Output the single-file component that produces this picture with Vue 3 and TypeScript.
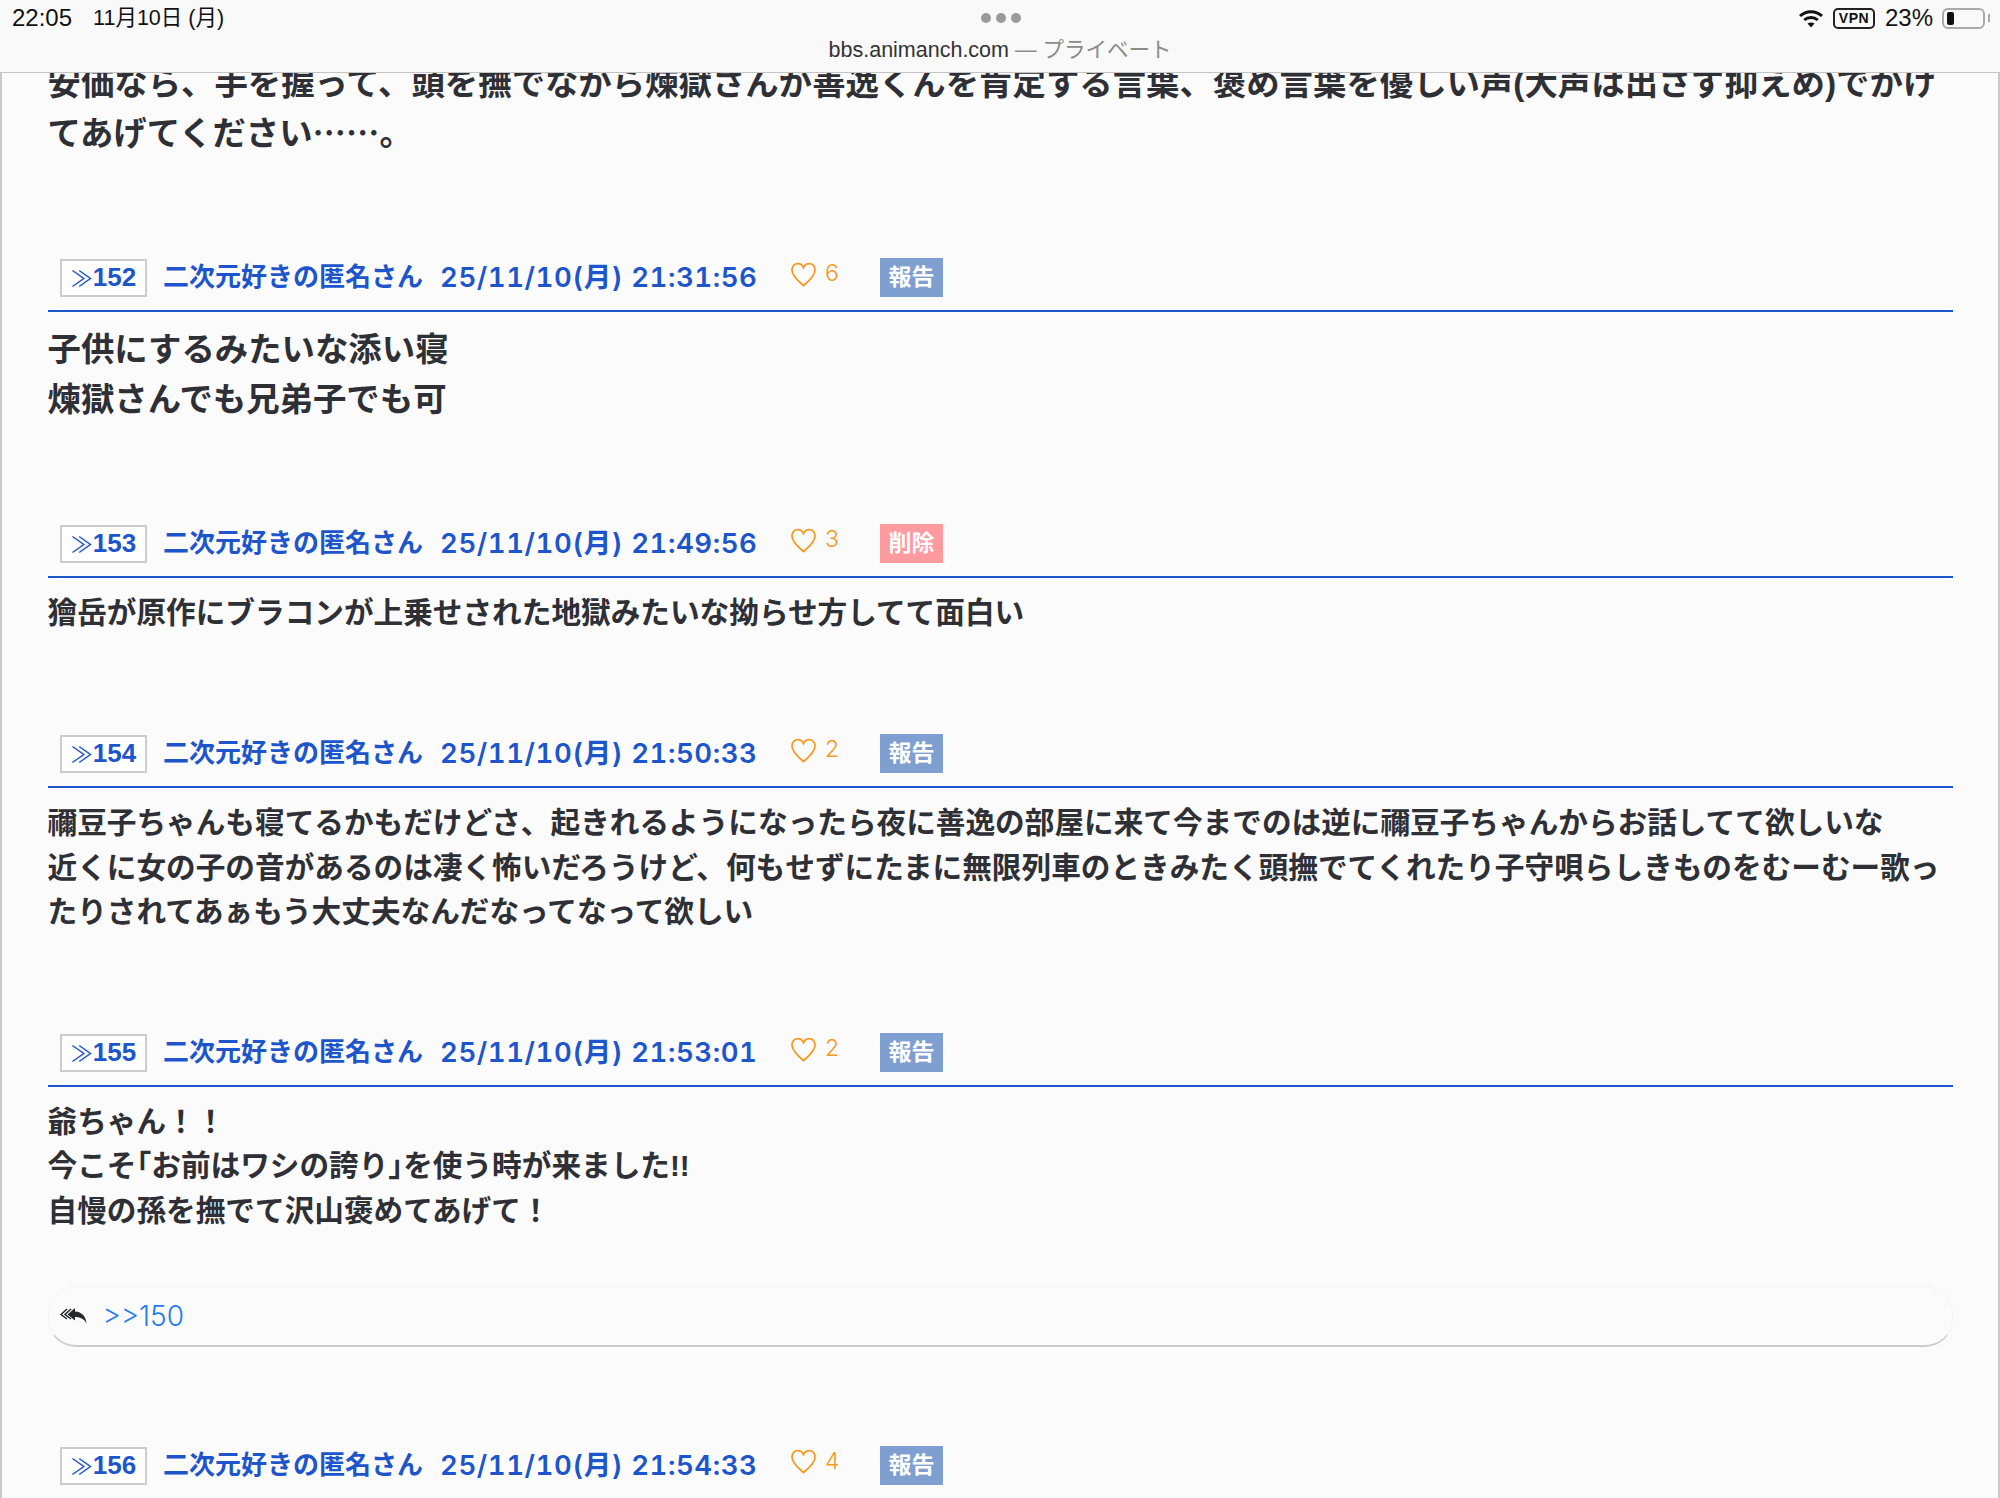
<script setup lang="ts">
interface Post {
  no: number
  time: string
  likes: number
  action: string
  size: 'large' | 'normal'
  text?: string
  reply?: string
}

const posts: Post[] = [
  { no: 152, time: '25/11/10(月) 21:31:56', likes: 6, action: '報告', size: 'large', text: '子供にするみたいな添い寝\n煉獄さんでも兄弟子でも可' },
  { no: 153, time: '25/11/10(月) 21:49:56', likes: 3, action: '削除', size: 'normal', text: '獪岳が原作にブラコンが上乗せされた地獄みたいな拗らせ方してて面白い' },
  { no: 154, time: '25/11/10(月) 21:50:33', likes: 2, action: '報告', size: 'normal', text: '禰豆子ちゃんも寝てるかもだけどさ、起きれるようになったら夜に善逸の部屋に来て今までのは逆に禰豆子ちゃんからお話してて欲しいな\n近くに女の子の音があるのは凄く怖いだろうけど、何もせずにたまに無限列車のときみたく頭撫でてくれたり子守唄らしきものをむーむー歌っ\nたりされてあぁもう大丈夫なんだなってなって欲しい' },
  { no: 155, time: '25/11/10(月) 21:53:01', likes: 2, action: '報告', size: 'normal', text: '爺ちゃん！！\n今こそ｢お前はワシの誇り｣を使う時が来ました!!\n自慢の孫を撫でて沢山褒めてあげて！', reply: '>>150' },
  { no: 156, time: '25/11/10(月) 21:54:33', likes: 4, action: '報告', size: 'normal' },
]
</script>

<template>
  <div class="screen">
    <header class="bar">
      <div class="status">
        <div class="clock"><span class="hm">22:05</span><span>11月10日 (月)</span></div>
        <div class="dots"><i></i><i></i><i></i></div>
        <div class="indicators">
          <svg class="wifi" width="24" height="19" viewBox="0 0 24 19">
            <path d="M1 7C7 1.2 17 1.2 23 7" fill="none" stroke="#111" stroke-width="3" />
            <path d="M5.2 11C9 7.6 15 7.6 18.8 11" fill="none" stroke="#111" stroke-width="3" />
            <path d="M12 18.5L8.5 14.6C10.5 13 13.5 13 15.5 14.6Z" fill="#111" />
          </svg>
          <span class="vpn">VPN</span>
          <span class="pct">23%</span>
          <span class="battery"><b></b></span>
          <span class="nub"></span>
        </div>
      </div>
      <div class="url">bbs.animanch.com <span>— プライベート</span></div>
    </header>

    <main class="thread">
      <p class="body large first">安価なら、手を握って、頭を撫でながら煉獄さんが善逸くんを肯定する言葉、褒め言葉を優しい声(大声は出さず抑えめ)でかけ
<span class="cjk">てあげてください……。</span></p>

      <article v-for="p in posts" :key="p.no" class="post">
        <div class="head">
          <span class="no"><span class="gt">≫</span>{{ p.no }}</span>
          <span class="name">二次元好きの匿名さん</span>
          <span class="time">{{ p.time }}</span>
          <span class="like">
            <svg width="27" height="25" viewBox="0 0 28 26"><path d="M14 24.5C9 20 2 14.5 2 8.2C2 4.4 4.8 1.8 8 1.8C10.6 1.8 12.8 3.2 14 5.8C15.2 3.2 17.4 1.8 20 1.8C23.2 1.8 26 4.4 26 8.2C26 14.5 19 20 14 24.5Z" fill="none" stroke="#f7981f" stroke-width="1.8" /></svg>
            <span class="count">{{ p.likes }}</span>
          </span>
          <span class="action" :class="{ danger: p.action === '削除' }">{{ p.action }}</span>
        </div>
        <p v-if="p.text" class="body" :class="{ large: p.size === 'large' }">{{ p.text }}</p>
        <div v-if="p.reply" class="reply">
          <svg width="27" height="17" viewBox="0 0 27 17">
            <path d="M7 2L1 7.5L7 12" fill="none" stroke="#26282c" stroke-width="1.5" />
            <path d="M11 2L5 7.5L11 12" fill="none" stroke="#26282c" stroke-width="1.5" />
            <path d="M15 1L7.5 7.5L15 13.5V10C20 10 24.5 12 26.5 16.5C26 9.5 22 5 15 4.5Z" fill="#26282c" />
          </svg>
          <span>{{ p.reply }}</span>
        </div>
      </article>
    </main>
  </div>
</template>

<style>
html, body { margin: 0; background: #fcfbfc; }
</style>

<style scoped>
.screen {
  width: 2000px;
  height: 1498px;
  overflow: hidden;
  background: #fcfbfc;
  font-family: "Liberation Sans", "Noto Sans CJK JP", sans-serif;
  color: #2e3035;
}
.bar {
  position: relative;
  z-index: 2;
  height: 72px;
  background: #f9f9f9;
  border-bottom: 1px solid #c4c4c4;
}
.status {
  height: 36px;
  display: grid;
  grid-template-columns: 1fr auto 1fr;
  align-items: center;
  padding: 0 10px 0 12px;
}
.clock { display: flex; align-items: center; gap: 21px; font-size: 21.5px; line-height: 30px; color: #111; }
.hm { font-size: 24px; }
.dots { display: flex; gap: 5px; }
.dots i { width: 10px; height: 10px; border-radius: 50%; background: #9a9a9a; }
.indicators { display: flex; justify-content: flex-end; align-items: center; font-size: 24px; color: #111; }
.wifi { margin-right: 10px; }
.vpn {
  width: 42px; height: 21px; box-sizing: border-box;
  border: 2px solid #222; border-radius: 5px;
  font-size: 14px; font-weight: 700; line-height: 17px; text-align: center; letter-spacing: 0.5px;
  margin-right: 10px;
}
.pct { margin-right: 9px; }
.battery {
  width: 43px; height: 21px; box-sizing: border-box; padding: 2px 3px;
  border: 2px solid #aaa; border-radius: 6px; display: flex;
}
.battery b { width: 7px; background: #111; border-radius: 2px; }
.nub { width: 2px; height: 8px; background: #aaa; margin-left: 3px; }
.url { text-align: center; font-size: 21.5px; line-height: 28px; color: #333; }
.url span { color: #8b8b8b; }
.thread {
  margin-top: -14px;
  height: 1440px;
  box-sizing: border-box;
  border-left: 2px solid #c9c9c9;
  border-right: 2px solid #c9c9c9;
  padding: 0 45px 0 45.5px;
}
.body {
  margin: 0;
  font-size: 29.65px;
  font-weight: 700;
  line-height: 44.25px;
  white-space: pre-line;
}
.body.large { font-size: 33.4px; line-height: 50px; }
.cjk { font-family: "Noto Sans CJK JP", sans-serif; line-height: 0; }
.post { margin-top: 99px; }
.head {
  display: flex;
  align-items: flex-end;
  height: 39px;
  padding: 0 0 13px 12.5px;
  border-bottom: 2px solid #1c55cc;
  color: #1c55cc;
  font-size: 26px;
  font-weight: 700;
}
.head + .body { margin-top: 13px; }
.no {
  width: 87px; height: 38px; box-sizing: border-box;
  border: 2px solid #ccc; background: #fff;
  line-height: 32px; text-align: center;
  margin-right: 16px;
}
.gt { font-size: 22px; font-weight: 400; }
.name { line-height: 36px; margin: 0 17px 2px 0; }
.time {
  line-height: 36px; width: 350px; margin-bottom: 2px;
  font-family: "Inter", "Noto Sans CJK JP", sans-serif;
  font-variant-numeric: tabular-nums;
  font-size: 27.5px; font-weight: 600;
  letter-spacing: 0.6px;
}
.like {
  display: flex; align-items: center; gap: 8px;
  width: 90px; height: 42px; margin-bottom: 2px;
  color: #f7981f;
}
.count { font-family: "Inter", sans-serif; font-size: 23px; font-weight: 300; margin-top: -2px; }
.action {
  width: 63px; height: 39px;
  background: #7f9fd0; color: #fff;
  font-size: 23px; line-height: 39px; text-align: center;
}
.action.danger { background: #ff9a9f; }
.reply {
  margin-top: 53px;
  height: 61px;
  box-sizing: border-box;
  display: flex;
  align-items: center;
  gap: 16px;
  padding-left: 11px;
  border: 1px solid #f5f4f5;
  border-bottom: 2px solid #ccc;
  border-radius: 28px;
  color: #1f7bf2;
  font-size: 28px;
  font-family: "Inter", "Noto Sans", sans-serif;
  font-weight: 300;
}
</style>
